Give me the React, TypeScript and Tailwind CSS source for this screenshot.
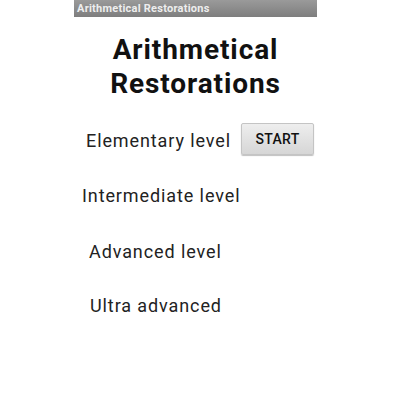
import React from "react";

export default function App() {
  return (
    <div className="w-[400px] h-[400px] bg-white" style={{ fontFamily: "Roboto, 'Liberation Sans', sans-serif" }}>
      <div className="ml-[74px] w-[243px] flex flex-col">
        <div className="h-[17px] bg-gradient-to-b from-[#9a9a9a] to-[#7e7e7e] flex items-center pl-[3px]">
          <span className="text-[11px] font-bold text-[#eeeeee] leading-none tracking-[0.25px]">Arithmetical Restorations</span>
        </div>
        <div className="mt-[16px] text-center font-bold text-[28px] leading-[34px] tracking-[0.9px] text-[#111]">
          <div>Arithmetical</div>
          <div>Restorations</div>
        </div>
        <div className="mt-[22px] flex items-start">
          <span className="ml-[12px] mt-[6px] text-[18px] leading-[24px] tracking-[0.9px] text-[#222]">Elementary level</span>
          <button className="ml-[10px] w-[73px] h-[32px] bg-gradient-to-b from-[#eeeeee] to-[#d6d6d6] border border-[#c4c4c4] rounded-[2px] shadow-[0_1px_1px_rgba(0,0,0,0.25)] text-[14px] font-medium tracking-[0.3px] text-[#111]">START</button>
        </div>
        <div className="mt-[29px] ml-[8px] text-[18px] leading-[24px] tracking-[0.9px] text-[#222]">Intermediate level</div>
        <div className="mt-[32px] ml-[15px] text-[18px] leading-[24px] tracking-[0.9px] text-[#222]">Advanced level</div>
        <div className="mt-[30px] ml-[16px] text-[18px] leading-[24px] tracking-[0.9px] text-[#222]">Ultra advanced</div>
      </div>
    </div>
  );
}
